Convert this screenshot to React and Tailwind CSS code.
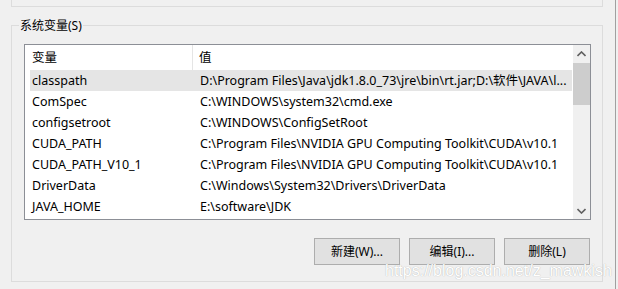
import React from 'react';

const rows = [
  { name: 'classpath', value: 'D:\\Program Files\\Java\\jdk1.8.0_73\\jre\\bin\\rt.jar;D:\\软件\\JAVA\\l...', selected: true },
  { name: 'ComSpec', value: 'C:\\WINDOWS\\system32\\cmd.exe' },
  { name: 'configsetroot', value: 'C:\\WINDOWS\\ConfigSetRoot' },
  { name: 'CUDA_PATH', value: 'C:\\Program Files\\NVIDIA GPU Computing Toolkit\\CUDA\\v10.1' },
  { name: 'CUDA_PATH_V10_1', value: 'C:\\Program Files\\NVIDIA GPU Computing Toolkit\\CUDA\\v10.1' },
  { name: 'DriverData', value: 'C:\\Windows\\System32\\Drivers\\DriverData' },
  { name: 'JAVA_HOME', value: 'E:\\software\\JDK' },
];

const Chevron = ({ down }) => (
  <svg width="9" height="6" viewBox="0 0 9 6" className={down ? 'rotate-180' : ''}>
    <path d="M0.5 5 L4.5 1 L8.5 5" fill="none" stroke="#606060" strokeWidth="1.6" />
  </svg>
);

const Button = ({ children }) => (
  <button className="w-[86px] h-[27px] border border-[#adadad] bg-[#e1e1e1] text-[12px] text-black leading-none">
    {children}
  </button>
);

export default function App() {
  return (
    <div
      className="relative w-[618px] h-[289px] bg-[#f0f0f0] overflow-hidden text-black"
      style={{ fontFamily: '"Noto Sans", "Noto Sans CJK SC", sans-serif' }}
    >
      <div className="w-[616px] h-full border-r border-[#a0a0a0]">
        <div className="ml-[11px] w-[592px] h-[7px] border-x border-b border-[#dcdcdc]" />

        <div className="ml-[11px] mt-[18px] w-[592px] h-[257px] border border-[#dcdcdc]">
          <div className="-mt-[9px] ml-[7px] px-[1px] w-fit bg-[#f0f0f0] text-[12px] leading-[17px]">
            系统变量(S)
          </div>

          <div className="ml-[12px] mt-[10px] w-[567px] h-[176px] border border-[#8c8f96] bg-white flex">
            <div className="w-[547px] flex flex-col text-[12.5px] leading-[17px]">
              <div className="h-[25px] flex items-center">
                <div className="w-[168px] h-full pl-[7px] flex items-center border-r border-[#e5e5e5]">变量</div>
                <div className="pl-[6px]">值</div>
              </div>
              {rows.map((r) => (
                <div
                  key={r.name}
                  className={`ml-[5px] h-[21px] grid grid-cols-[168px_1fr] items-center whitespace-nowrap overflow-hidden ${r.selected ? 'bg-[#e5e5e5]' : ''}`}
                >
                  <div className="pl-[2px]">{r.name}</div>
                  <div className="pl-[2px] overflow-hidden">{r.value}</div>
                </div>
              ))}
            </div>
            <div className="ml-[1px] w-[17px] h-full bg-[#f0f0f0] flex flex-col">
              <div className="h-[17px] flex items-center justify-center">
                <Chevron />
              </div>
              <div className="mt-[1px] h-[42px] bg-[#cdcdcd]" />
              <div className="flex-1" />
              <div className="h-[17px] flex items-center justify-center">
                <Chevron down />
              </div>
            </div>
          </div>

          <div className="mt-[18px] mr-[12px] flex justify-end gap-[9px]">
            <Button>新建(W)...</Button>
            <Button>编辑(I)...</Button>
            <Button>删除(L)</Button>
          </div>
        </div>
      </div>

      <div
        className="absolute left-[385px] top-[259px] text-[16px] text-white [text-shadow:0_0_1px_#a0a0a0]"
        style={{ fontFamily: '"Liberation Sans", Arial, sans-serif' }}
      >
        https://blog.csdn.net/z_mawkish
      </div>
    </div>
  );
}
